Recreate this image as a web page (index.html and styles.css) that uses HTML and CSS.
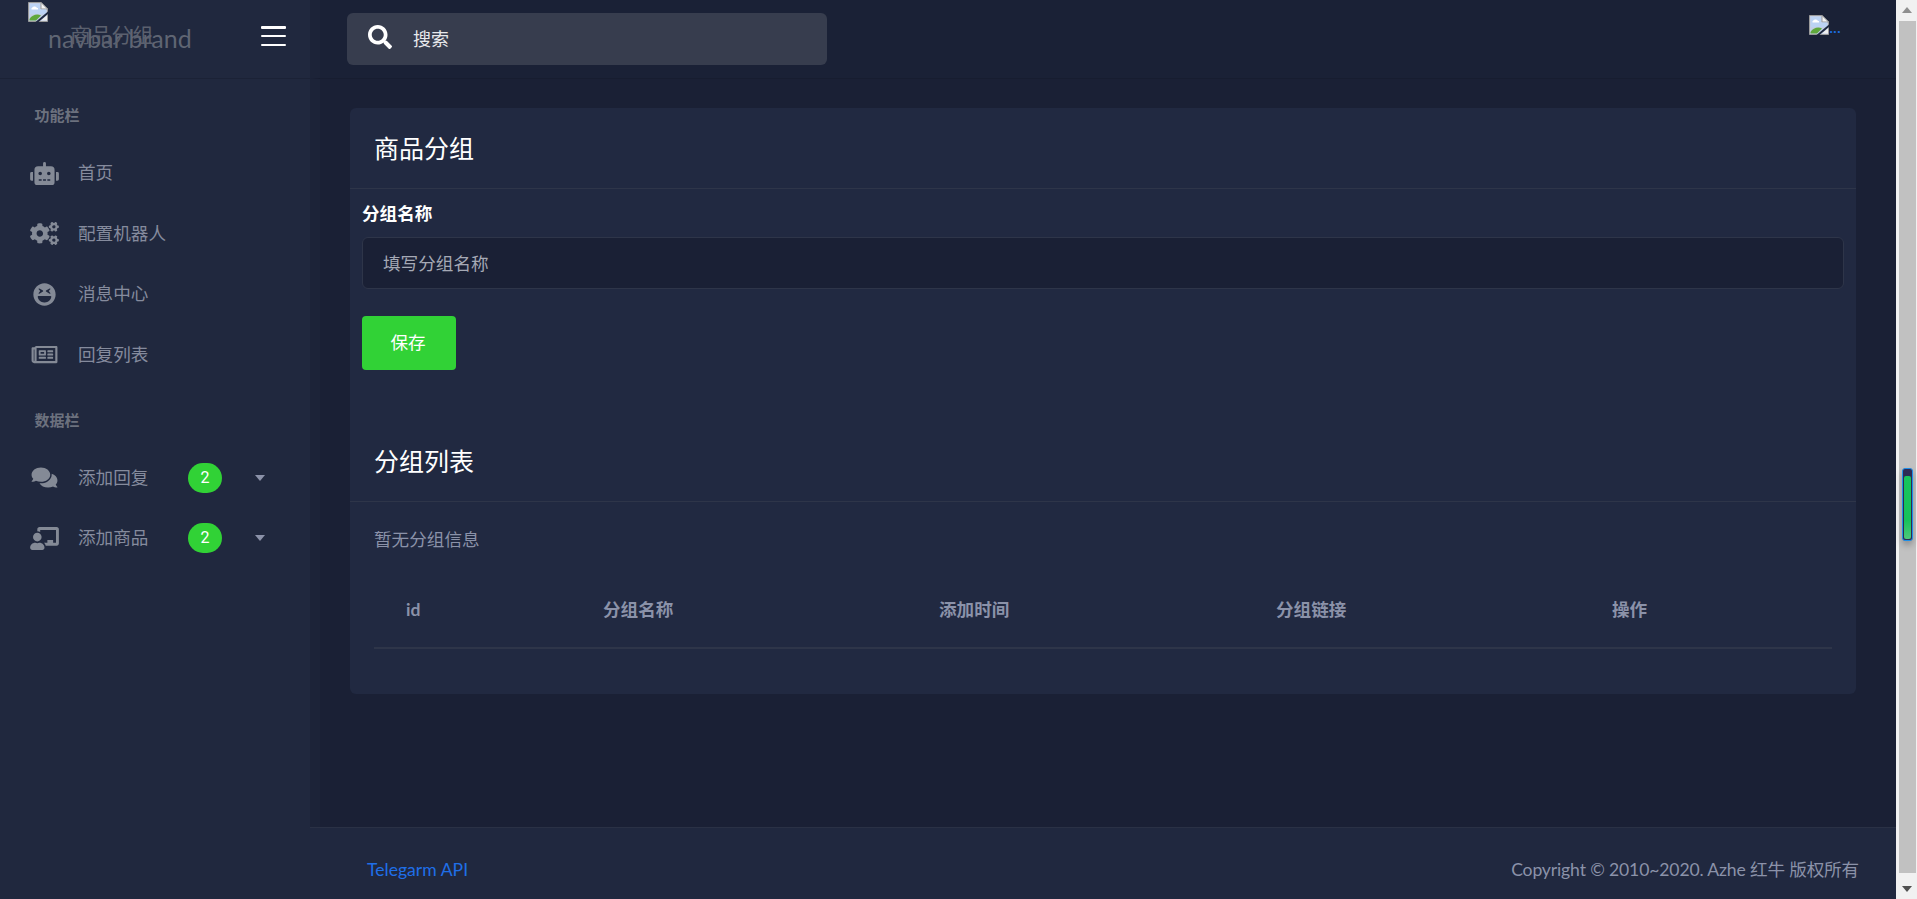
FILE: index.html
```html
<!DOCTYPE html>
<html lang="zh">
<head>
<meta charset="utf-8">
<title>商品分组</title>
<link rel="stylesheet" href="styles.css">
</head>
<body>
<svg class="defs" width="0" height="0" aria-hidden="true">
  <symbol id="broken" viewBox="0 0 20 20">
    <path d="M0.5 0.5H13L19.5 7V19.5H0.5Z" fill="#c3cfe6" stroke="#9a9a9a"/>
    <path d="M13 0.5V7H19.5Z" fill="#f4f4f4" stroke="#9a9a9a"/>
    <path d="M2 2H12V7.5H18V12H2Z" fill="#bcd3f4"/>
    <path d="M4 6c1-2 4-2 5 0h1v1.4H3.500V6Z" fill="#fff"/>
    <path d="M1.500 18.500V17C4 13 9 11.500 13 13.500L8 18.500Z" fill="#5fa83c"/>
    <path d="M7.500 20L20 9.500V12L10.500 20Z" fill="#1f2940"/>
    <path d="M13 18.500L19 13.500V18.500Z" fill="#eeeeee"/>
  </symbol>
</svg>
<div class="app">
  <aside class="sidebar">
    <header class="side-head">
      <a class="brand">
        <svg class="broken-img"><use href="#broken"/></svg>
        <span class="brand-alt">navbar brand</span>
        <span class="brand-title">商品分组</span>
      </a>
      <button class="burger" aria-label="menu"><i></i><i></i><i></i></button>
    </header>
    <nav class="side-nav">
      <div class="nav-label">功能栏</div>
      <a class="nav-item">
        <svg class="ico" viewBox="0 0 640 512"><path d="M32,224H64V416H32A31.96166,31.96166,0,0,1,0,384V256A31.96166,31.96166,0,0,1,32,224Zm512-48V448a64.06328,64.06328,0,0,1-64,64H160a64.06328,64.06328,0,0,1-64-64V176a79.974,79.974,0,0,1,80-80H288V32a32,32,0,0,1,64,0V96H464A79.974,79.974,0,0,1,544,176ZM264,256a40,40,0,1,0-40,40A39.997,39.997,0,0,0,264,256Zm-8,128H192v32h64Zm96,0H288v32h64ZM456,256a40,40,0,1,0-40,40A39.997,39.997,0,0,0,456,256Zm-8,128H384v32h64ZM640,256V384a31.96166,31.96166,0,0,1-32,32H576V224h32A31.96166,31.96166,0,0,1,640,256Z"/></svg>
        <span class="nav-text">首页</span>
      </a>
      <a class="nav-item">
        <svg class="ico" viewBox="0 0 640 512"><path d="M512.1 191l-8.2 14.3c-3 5.3-9.4 7.5-15.1 5.4-11.8-4.4-22.6-10.7-32.1-18.6-4.6-3.8-5.8-10.5-2.8-15.7l8.2-14.3c-6.9-8-12.3-17.3-15.9-27.4h-16.5c-6 0-11.2-4.3-12.2-10.3-2-12-2.1-24.6 0-37.1 1-6 6.2-10.4 12.2-10.4h16.5c3.6-10.1 9-19.4 15.9-27.4l-8.2-14.3c-3-5.2-1.9-11.9 2.8-15.7 9.5-7.9 20.4-14.2 32.1-18.6 5.7-2.1 12.1.1 15.1 5.4l8.2 14.3c10.5-1.9 21.2-1.9 31.7 0L552 6.3c3-5.3 9.4-7.5 15.1-5.4 11.8 4.4 22.6 10.7 32.1 18.6 4.6 3.8 5.8 10.5 2.8 15.7l-8.2 14.3c6.9 8 12.3 17.3 15.9 27.4h16.5c6 0 11.2 4.3 12.2 10.3 2 12 2.1 24.6 0 37.1-1 6-6.2 10.4-12.2 10.4h-16.5c-3.6 10.1-9 19.4-15.9 27.4l8.2 14.3c3 5.2 1.9 11.9-2.8 15.7-9.5 7.9-20.4 14.2-32.1 18.6-5.7 2.1-12.1-.1-15.1-5.4l-8.2-14.3c-10.4 1.9-21.2 1.9-31.7 0zm-10.5-58.8c38.5 29.6 82.4-14.3 52.8-52.8-38.5-29.7-82.4 14.3-52.8 52.8zM386.3 286.1l33.7 16.8c10.1 5.8 14.5 18.1 10.5 29.1-8.9 24.2-26.4 46.4-42.6 65.8-7.4 8.9-20.2 11.1-30.3 5.3l-29.1-16.8c-16 13.7-34.6 24.6-54.9 31.7v33.6c0 11.6-8.3 21.6-19.7 23.6-24.6 4.2-50.4 4.4-75.9 0-11.5-2-20-11.9-20-23.6V418c-20.3-7.2-38.9-18-54.9-31.7L74 403c-10 5.8-22.9 3.6-30.3-5.3-16.2-19.4-33.3-41.6-42.2-65.7-4-10.9.4-23.2 10.5-29.1l33.3-16.8c-3.9-20.9-3.9-42.4 0-63.4L12 205.8c-10.1-5.8-14.6-18.1-10.5-29 8.9-24.2 26-46.4 42.2-65.8 7.4-8.9 20.2-11.1 30.3-5.3l29.1 16.8c16-13.7 34.6-24.6 54.9-31.7V57.1c0-11.5 8.2-21.5 19.6-23.5 24.6-4.2 50.5-4.4 76-.1 11.5 2 20 11.9 20 23.6v33.6c20.3 7.2 38.9 18 54.9 31.7l29.1-16.8c10-5.8 22.9-3.6 30.3 5.3 16.2 19.4 33.2 41.6 42.1 65.8 4 10.9.1 23.2-10 29.1l-33.7 16.8c3.9 21 3.9 42.5 0 63.5zm-117.6 21.1c59.2-77-28.7-164.9-105.7-105.7-59.2 77 28.7 164.9 105.7 105.7zm243.4 182.7l-8.2 14.3c-3 5.3-9.4 7.5-15.1 5.4-11.8-4.4-22.6-10.7-32.1-18.6-4.6-3.8-5.8-10.5-2.8-15.7l8.2-14.3c-6.9-8-12.3-17.3-15.9-27.4h-16.5c-6 0-11.2-4.3-12.2-10.3-2-12-2.1-24.6 0-37.1 1-6 6.2-10.4 12.2-10.4h16.5c3.6-10.1 9-19.4 15.9-27.4l-8.2-14.3c-3-5.2-1.9-11.9 2.8-15.7 9.5-7.9 20.4-14.2 32.1-18.6 5.7-2.1 12.1.1 15.1 5.4l8.2 14.3c10.5-1.9 21.2-1.9 31.7 0l8.2-14.3c3-5.3 9.4-7.5 15.1-5.4 11.8 4.4 22.6 10.7 32.1 18.6 4.6 3.8 5.8 10.5 2.8 15.7l-8.2 14.3c6.9 8 12.3 17.3 15.9 27.4h16.5c6 0 11.2 4.3 12.2 10.3 2 12 2.1 24.6 0 37.1-1 6-6.2 10.4-12.2 10.4h-16.5c-3.6 10.1-9 19.4-15.9 27.4l8.2 14.3c3 5.2 1.9 11.9-2.8 15.7-9.5 7.9-20.4 14.2-32.1 18.6-5.7 2.1-12.1-.1-15.1-5.4l-8.2-14.3c-10.4 1.9-21.2 1.9-31.7 0zM501.6 431c38.5 29.6 82.4-14.3 52.8-52.8-38.5-29.6-82.4 14.3-52.8 52.8z"/></svg>
        <span class="nav-text">配置机器人</span>
      </a>
      <a class="nav-item">
        <svg class="ico" viewBox="-72 0 640 512"><path d="M248 8C111 8 0 119 0 256s111 248 248 248 248-111 248-248S385 8 248 8zm33.8 161.700l80-48c11.600-6.900 24 7.700 15.400 18L343.600 180l33.600 40.300c8.700 10.400-3.900 24.800-15.400 18l-80-48c-7.700-4.700-7.700-15.900 0-20.600zm-163-30c-8.600-10.300 3.800-24.900 15.400-18l80 48c7.800 4.700 7.800 15.900 0 20.600l-80 48c-11.500 6.800-24-7.600-15.400-18l33.600-40.300-33.600-40.300zM398.900 306C390 377 329.400 432 256 432h-16c-73.400 0-134-55-142.900-126-1.200-9.500 6.300-18 15.900-18h270c9.600 0 17.100 8.400 15.900 18z"/></svg>
        <span class="nav-text">消息中心</span>
      </a>
      <a class="nav-item">
        <svg class="ico" viewBox="-32 0 640 512"><path d="M552 64H112c-20.858 0-38.643 13.377-45.248 32H24c-13.255 0-24 10.745-24 24v272c0 30.928 25.072 56 56 56h496c13.255 0 24-10.745 24-24V88c0-13.255-10.745-24-24-24zM48 392V144h16v248c0 4.411-3.589 8-8 8s-8-3.589-8-8zm480 8H111.422c.374-2.614.578-5.283.578-8V112h416v288zM172 280h136c6.627 0 12-5.373 12-12v-96c0-6.627-5.373-12-12-12H172c-6.627 0-12 5.373-12 12v96c0 6.627 5.373 12 12 12zm28-80h80v40h-80v-40zm-40 140v-24c0-6.627 5.373-12 12-12h136c6.627 0 12 5.373 12 12v24c0 6.627-5.373 12-12 12H172c-6.627 0-12-5.373-12-12zm192 0v-24c0-6.627 5.373-12 12-12h104c6.627 0 12 5.373 12 12v24c0 6.627-5.373 12-12 12H364c-6.627 0-12-5.373-12-12zm0-144v-24c0-6.627 5.373-12 12-12h104c6.627 0 12 5.373 12 12v24c0 6.627-5.373 12-12 12H364c-6.627 0-12-5.373-12-12zm0 72v-24c0-6.627 5.373-12 12-12h104c6.627 0 12 5.373 12 12v24c0 6.627-5.373 12-12 12H364c-6.627 0-12-5.373-12-12z"/></svg>
        <span class="nav-text">回复列表</span>
      </a>
      <div class="nav-label nav-label-second">数据栏</div>
      <a class="nav-item">
        <svg class="ico" viewBox="-32 0 640 512"><path d="M416 192c0-88.400-93.100-160-208-160S0 103.600 0 192c0 34.300 14.100 65.900 38 92-13.400 30.200-35.500 54.200-35.800 54.500-2.200 2.300-2.800 5.700-1.500 8.700S4.800 352 8 352c36.600 0 66.900-12.300 88.700-25 32.200 15.700 70.300 25 111.300 25 114.900 0 208-71.600 208-160zm122 220c23.900-26 38-57.700 38-92 0-66.900-53.500-124.200-129.300-148.100.9 6.600 1.300 13.300 1.300 20.100 0 105.900-107.700 192-240 192-10.800 0-21.300-.8-31.700-1.900C207.800 439.600 281.800 480 368 480c41 0 79.100-9.200 111.300-25 21.800 12.700 52.100 25 88.700 25 3.200 0 6.100-1.900 7.300-4.800 1.300-2.900.7-6.300-1.500-8.700-.3-.3-22.400-24.200-35.800-54.500z"/></svg>
        <span class="nav-text">添加回复</span>
        <span class="badge">2</span>
        <span class="caret"></span>
      </a>
      <a class="nav-item">
        <svg class="ico" viewBox="0 0 640 512"><path d="M208 352c-2.390 0-4.780.35-7.060 1.090C187.980 357.300 174.350 360 160 360c-14.350 0-27.980-2.700-40.950-6.910-2.280-.74-4.660-1.090-7.050-1.090C49.940 352-.33 402.480 0 464.620.14 490.880 21.730 512 48 512h224c26.270 0 47.860-21.120 48-47.380.33-62.140-49.940-112.620-112-112.620zm-48-32c53.020 0 96-42.980 96-96s-42.980-96-96-96-96 42.980-96 96 42.980 96 96 96zM592 0H208c-26.470 0-48 22.250-48 49.590V96c23.420 0 45.100 6.780 64 17.800V64h352v288h-64v-64H384v64h-76.240c19.100 16.690 33.120 38.730 39.690 64H592c26.470 0 48-22.250 48-49.590V49.590C640 22.250 618.470 0 592 0z"/></svg>
        <span class="nav-text">添加商品</span>
        <span class="badge">2</span>
        <span class="caret"></span>
      </a>
    </nav>
  </aside>

  <div class="main">
    <header class="topbar">
      <div class="search">
        <svg class="search-ico" viewBox="0 0 512 512"><path d="M505 442.700L405.300 343c-4.500-4.500-10.600-7-17-7H372c27.600-35.300 44-79.700 44-128C416 93.100 322.900 0 208 0S0 93.100 0 208s93.100 208 208 208c48.300 0 92.700-16.400 128-44v16.300c0 6.400 2.500 12.500 7 17l99.700 99.700c9.400 9.400 24.600 9.400 33.900 0l28.300-28.300c9.400-9.400 9.400-24.600.1-34zM208 336c-70.700 0-128-57.200-128-128 0-70.700 57.200-128 128-128 70.700 0 128 57.200 128 128 0 70.700-57.200 128-128 128z"/></svg>
        <input class="search-input" type="text" placeholder="搜索">
      </div>
      <a class="user">
        <svg class="broken-img"><use href="#broken"/></svg>
        <span class="user-alt">...</span>
      </a>
    </header>

    <main class="content">
      <section class="card">
        <h2 class="card-title">商品分组</h2>
        <form class="form">
          <label class="form-label">分组名称</label>
          <input class="form-input" type="text" placeholder="填写分组名称">
          <button class="btn" type="button">保存</button>
        </form>
        <h2 class="card-title">分组列表</h2>
        <div class="card-body">
          <p class="empty">暂无分组信息</p>
          <table class="table">
            <colgroup>
              <col class="col-id"><col class="col-name"><col class="col-time"><col class="col-link"><col class="col-last">
            </colgroup>
            <thead>
              <tr><th>id</th><th>分组名称</th><th>添加时间</th><th>分组链接</th><th>操作</th></tr>
            </thead>
          </table>
        </div>
      </section>
    </main>

    <footer class="footer">
      <a class="footer-link">Telegarm API</a>
      <span class="copyright">Copyright © 2010~2020. Azhe 红牛 版权所有</span>
    </footer>
  </div>

  <div class="scrollbar">
    <div class="arrow arrow-up"></div>
    <div class="thumb"></div>
    <div class="arrow arrow-down"></div>
    <div class="widget"><div class="widget-fill"></div></div>
  </div>
</div>
</body>
</html>
```

FILE: styles.css
```css
* { box-sizing: border-box; }
html, body { height: 100%; }
body {
  margin: 0;
  overflow: hidden;
  background: #1a2035;
  font-family: Lato, "Noto Sans CJK SC", sans-serif;
  font-size: 17.6px;
  line-height: 26px;
  color: #8b92a9;
}
.defs { position: absolute; }
.app { display: flex; height: 899px; }

/* Sidebar */
.sidebar { width: 310px; flex: none; background: #20283e; display: flex; flex-direction: column; }
.side-head {
  height: 79px; flex: none; position: relative;
  display: flex; align-items: center; justify-content: flex-end;
  padding: 0 24px 6px 0;
  border-bottom: 1px solid #1b2236;
}
.brand { position: absolute; left: 28px; top: 2px; width: 200px; height: 70px; }
.broken-img { display: block; width: 20px; height: 20px; }
.brand-alt { position: absolute; left: 20px; top: 19px; font-size: 25px; line-height: 34px; color: #5f6573; white-space: nowrap; }
.brand-title { position: absolute; left: 42px; top: 18px; font-size: 20.800px; line-height: 30px; color: #5b606e; white-space: nowrap; }
.burger { width: 25px; height: 20px; padding: 0; border: 0; background: none; display: flex; flex-direction: column; justify-content: space-between; }
.burger i { display: block; height: 2.500px; background: #fff; border-radius: 1px; }

.side-nav { padding-top: 21px; }
.nav-label { height: 30px; padding-left: 34.500px; font-size: 15px; line-height: 30px; font-weight: 700; color: #6c717e; margin-bottom: 13px; }
.nav-label-second { margin-top: 20px; margin-bottom: 12.500px; }
.nav-item { display: flex; align-items: center; height: 60.500px; padding-left: 30px; color: #858b9d; }
.ico { width: 29px; height: 23px; flex: none; fill: #848a96; }
.nav-text { margin-left: 19px; width: 110px; font-size: 17.6px; white-space: nowrap; }
.badge { width: 34px; height: 30px; border-radius: 15px; background: #31d236; color: #fff; font-family: Roboto, sans-serif; font-size: 16px; line-height: 30px; text-align: center; }
.caret { margin-left: 33px; width: 0; height: 0; border-left: 5.500px solid transparent; border-right: 5.500px solid transparent; border-top: 6px solid #8b92a9; }

/* Main column */
.main { flex: 1; min-width: 0; display: flex; flex-direction: column; }
.topbar {
  height: 79px; flex: none;
  display: flex; align-items: flex-start; justify-content: space-between;
  padding: 13px 55px 0 27px;
  border-left: 10px solid #1c2338;
  border-bottom: 1px solid #171d30;
  background: #1a2136;
}
.search { width: 480px; height: 52px; display: flex; align-items: center; padding-left: 21px; border-radius: 6px; background: #373d4e; }
.search-ico { width: 24px; height: 24px; flex: none; fill: #fff; margin-bottom: 5px; }
.search-input { flex: 1; min-width: 0; margin-left: 21px; border: 0; padding: 0; outline: 0; background: none; color: #fff; font: 18px Lato, "Noto Sans CJK SC", sans-serif; }
.search-input::placeholder { color: #e8e9ec; opacity: 1; }
.user { display: flex; align-items: flex-end; margin-top: 2px; }
.user-alt { margin-left: 1px; font-size: 14px; line-height: 14px; letter-spacing: 0.5px; color: #1a6fe0; font-weight: 700; }

.content { flex: 1; padding: 29px 40px 0 30px; border-left: 10px solid #1c2338; background: #1a2035; }
.card { height: 586px; border-radius: 6px; background: #212941; }
.card-title { margin: 0; height: 81px; padding: 0 24px; border-bottom: 1px solid #2e3549; font-size: 25px; line-height: 70px; font-weight: 400; color: #fff; display: flex; align-items: center; }
.form { padding: 12px 12px 51px; display: flex; flex-direction: column; align-items: flex-start; }
.form-label { height: 26px; margin-bottom: 10px; font-weight: 700; color: #fff; }
.form-input { width: 100%; height: 52px; padding: 0 20px; border: 1px solid #2e3549; border-radius: 6px; background: #1a2035; color: #fff; font: 17.6px Lato, "Noto Sans CJK SC", sans-serif; outline: 0; }
.form-input::placeholder { color: #a5a9b5; opacity: 1; }
.btn { margin-top: 27px; width: 94px; height: 54px; padding: 0 2px 4px 0; border: 0; border-radius: 4px; background: #31d236; color: #fff; font: 17.6px Lato, "Noto Sans CJK SC", sans-serif; }
.card-body { padding: 25px 24px 0; }
.empty { margin: 0 0 18px; }
.table { width: 1458px; border-collapse: collapse; table-layout: fixed; }
.col-id { width: 197px; }
.col-name { width: 336px; }
.col-time { width: 337px; }
.col-link { width: 336px; }
.col-last { width: 252px; }
.table th { height: 77px; padding: 1px 0 0 32px; border-bottom: 2px solid #2e3549; text-align: left; font-weight: 700; color: #8b92a9; }

.footer { height: 72px; flex: none; display: flex; align-items: center; justify-content: space-between; padding: 12px 37px 0 57px; border-top: 1px solid #2a3145; background: #20283f; }
.footer-link { color: #1f6fe8; }
.copyright { color: #8b92a9; letter-spacing: -0.15px; }

/* Window scrollbar */
.scrollbar { width: 21px; flex: none; position: relative; display: flex; flex-direction: column; align-items: center; background: #f1f1f1; padding-left: 1px; }
.arrow { width: 0; height: 0; border-left: 5px solid transparent; border-right: 5px solid transparent; }
.arrow-up { margin-top: 7px; margin-bottom: 8px; border-bottom: 6px solid #8f8f8f; }
.arrow-down { margin-top: 13px; margin-bottom: 7px; border-top: 6px solid #505050; }
.thumb { width: 17px; flex: 1; background: #c1c1c1; }
.widget { position: absolute; left: 6px; top: 468px; width: 11px; height: 73px; padding: 7px 1px 1px; border: 1px solid #1f8fe8; border-radius: 3px; background: #2d2a55; box-shadow: 0 4px 6px rgba(0,0,0,.25); }
.widget-fill { height: 100%; border-radius: 2px; background: linear-gradient(#18c45c, #17c25a 70%, #4fc77a); }
```
